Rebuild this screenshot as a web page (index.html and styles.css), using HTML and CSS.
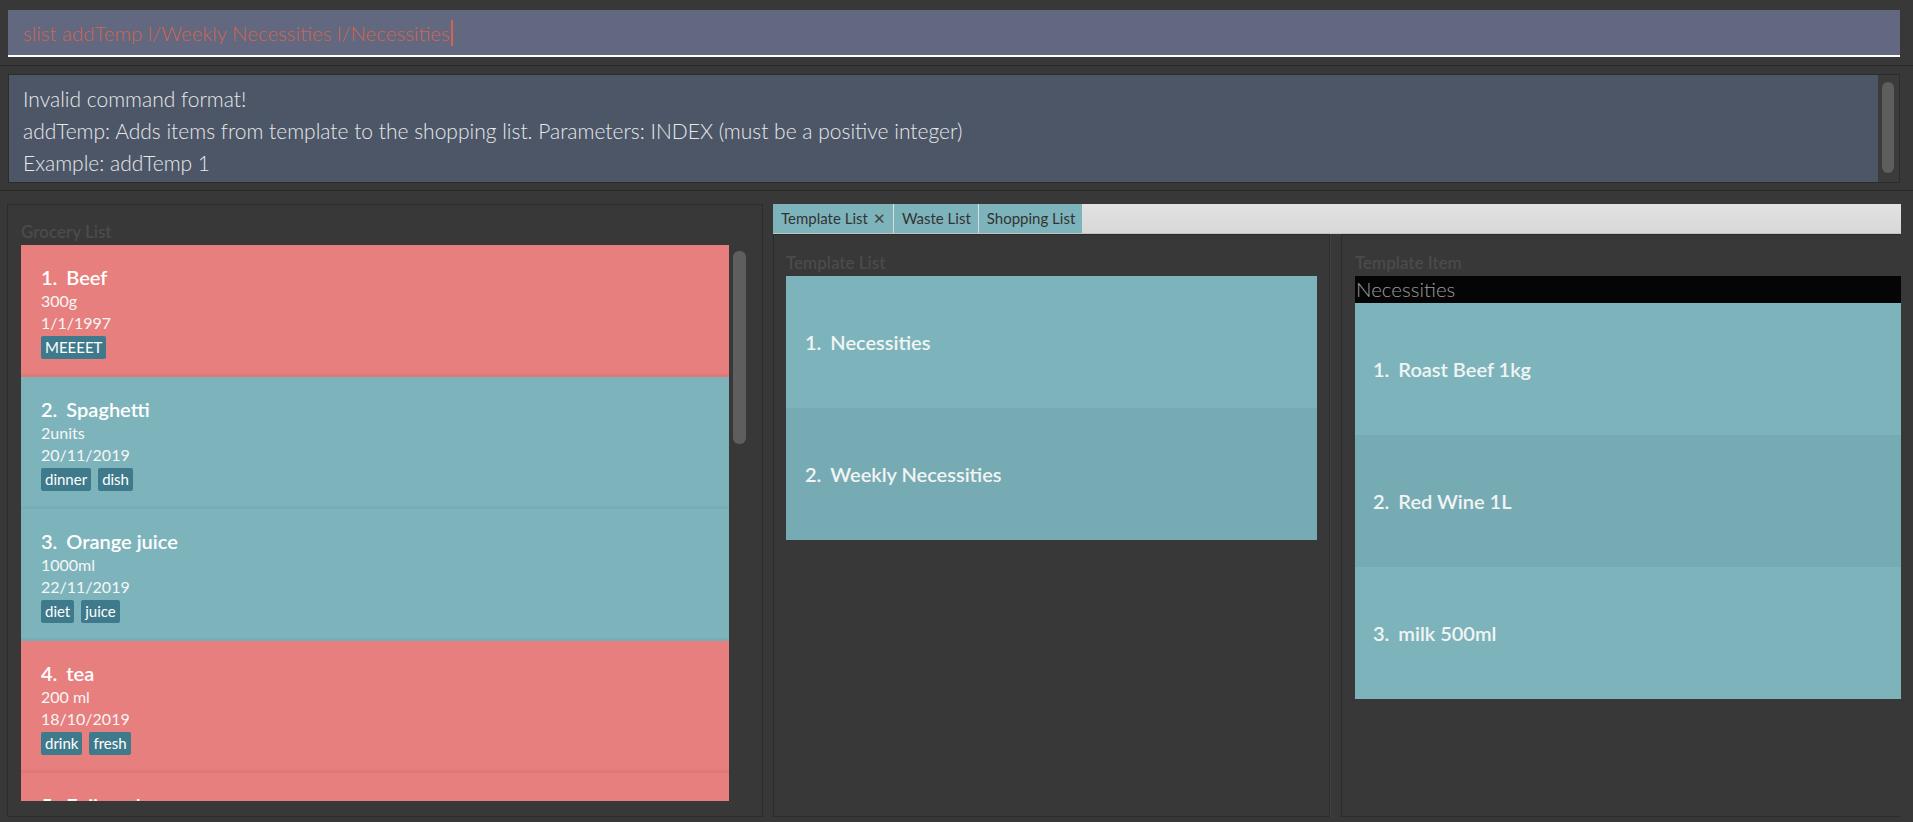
FILE: index.html
```html
<!DOCTYPE html>
<html>
  <head>
    <meta charset="utf-8">
    <link rel="stylesheet" href="styles.css">
  </head>
  <body>
    <div class="command-bar">
      <div class="command-box"><span class="command-box__text">slist addTemp l/Weekly Necessities l/Necessities</span><span class="command-box__caret"></span></div>
    </div>

    <div class="result-bar">
      <div class="result-box">
        <div class="result-box__text">
          <div>Invalid command format!</div>
          <div>addTemp: Adds items from template to the shopping list. Parameters: INDEX (must be a positive integer)</div>
          <div>Example: addTemp 1</div>
        </div>
        <div class="result-box__scroll"><div class="result-box__thumb"></div></div>
      </div>
    </div>

    <div class="main">
      <div class="panel grocery">
        <div class="panel__label">Grocery List</div>
        <div class="grocery__list">
          <div class="grocery__cards">
            <div class="card card--red">
              <div class="card__title"><span class="card__idx">1.</span>Beef</div>
              <div class="card__detail">300g</div>
              <div class="card__detail">1/1/1997</div>
              <div class="card__tags"><span class="tag">MEEEET</span></div>
            </div>
            <div class="card">
              <div class="card__title"><span class="card__idx">2.</span>Spaghetti</div>
              <div class="card__detail">2units</div>
              <div class="card__detail">20/11/2019</div>
              <div class="card__tags"><span class="tag">dinner</span><span class="tag">dish</span></div>
            </div>
            <div class="card">
              <div class="card__title"><span class="card__idx">3.</span>Orange juice</div>
              <div class="card__detail">1000ml</div>
              <div class="card__detail">22/11/2019</div>
              <div class="card__tags"><span class="tag">diet</span><span class="tag">juice</span></div>
            </div>
            <div class="card card--red">
              <div class="card__title"><span class="card__idx">4.</span>tea</div>
              <div class="card__detail">200 ml</div>
              <div class="card__detail">18/10/2019</div>
              <div class="card__tags"><span class="tag">drink</span><span class="tag">fresh</span></div>
            </div>
            <div class="card card--red">
              <div class="card__title"><span class="card__idx">5.</span>Fuji apple</div>
            </div>
          </div>
          <div class="scroll"><div class="scroll__thumb"></div></div>
        </div>
      </div>

      <div class="tabs">
        <div class="tabs__header">
          <div class="tab">Template List<span class="tab__close">&#x2715;</span></div>
          <div class="tab">Waste List</div>
          <div class="tab">Shopping List</div>
        </div>
        <div class="tabs__body">
          <div class="panel template-list">
            <div class="panel__label">Template List</div>
            <div class="rows">
              <div class="row"><span class="card__idx">1.</span>Necessities</div>
              <div class="row row--alt"><span class="card__idx">2.</span>Weekly Necessities</div>
            </div>
          </div>
          <div class="divider"></div>
          <div class="panel template-item">
            <div class="panel__label">Template Item</div>
            <div class="template-item__name">Necessities</div>
            <div class="rows">
              <div class="row"><span class="card__idx">1.</span>Roast Beef 1kg</div>
              <div class="row row--alt"><span class="card__idx">2.</span>Red Wine 1L</div>
              <div class="row"><span class="card__idx">3.</span>milk 500ml</div>
            </div>
          </div>
        </div>
      </div>
    </div>
  </body>
</html>
```

FILE: styles.css
```css
html,
body {
  margin: 0;
  height: 822px;
  overflow: hidden;
}
body {
  background: #383838;
  font-family: Lato, "Open Sans", sans-serif;
  color: #fff;
}

/* command input */
.command-bar {
  padding: 10px 13px 8px 8px;
  border-bottom: 1px solid #2a2a2a;
}
.command-box {
  height: 45px;
  background: #616880;
  border-bottom: 2px solid #fff;
  display: flex;
  align-items: center;
  padding-left: 15px;
  font-size: 20.5px;
  font-weight: 300;
  color: #d06651;
}
.command-box__caret {
  display: inline-block;
  width: 2px;
  height: 26px;
  background: #d06651;
  margin-left: 1px;
}

/* result display */
.result-bar {
  padding: 8px 13px 7px 8px;
  border-bottom: 1px solid #2a2a2a;
}
.result-box {
  height: 107px;
  display: flex;
  border: 1px solid #2c2c2c;
}
.result-box__text {
  flex: 1;
  background: #4d5666;
  padding: 8px 14px;
  font-size: 21px;
  font-weight: 300;
  line-height: 32px;
  color: #e6e8ec;
}
.result-box__scroll {
  width: 21px;
  background: #3b3b3b;
  padding-top: 7px;
}
.result-box__thumb {
  width: 12px;
  height: 91px;
  margin-left: 4px;
  border-radius: 6px;
  background: #5e5e5e;
}

/* bottom area */
.main {
  display: flex;
  gap: 10px;
  padding: 13px 12px 5px 7px;
  height: 613px;
}
.panel {
  border: 1px solid #2c2c2c;
  box-sizing: border-box;
  background: #383838;
}
.panel__label {
  font-size: 17px;
  font-weight: 600;
  line-height: 21px;
  color: #4b4b4b;
  margin-bottom: 3px;
}

.grocery {
  width: 756px;
  padding: 16px 15px 15px 13px;
  display: flex;
  flex-direction: column;
}
.grocery__list {
  flex: 1;
  display: flex;
  gap: 4px;
  overflow: hidden;
}
.grocery__cards {
  width: 708px;
  overflow: hidden;
}
.scroll {
  width: 13px;
  padding-top: 6px;
}
.scroll__thumb {
  height: 193px;
  border-radius: 6px;
  background: #5e5e5e;
}

.card {
  height: 132px;
  box-sizing: border-box;
  padding: 19px 20px 0 20px;
  background: #7db4bc;
  border-bottom: 3px solid #77adb5;
}
.card--red {
  background: #e77f7e;
  border-bottom-color: #e07876;
}
.card__title {
  font-size: 20px;
  font-weight: 600;
  line-height: 26px;
}
.card__idx {
  margin-right: 9px;
}
.card__detail {
  font-size: 16px;
  line-height: 22px;
  color: #f6f6f6;
}
.card__detail:first-of-type {
  margin-top: 5px;
}
.card__tags {
  display: flex;
  gap: 7px;
  margin-top: 2px;
}
.tag {
  background: #3f7a8c;
  border-radius: 2px;
  padding: 0 4px;
  height: 23px;
  line-height: 23px;
  font-size: 15px;
}

/* tab pane */
.tabs {
  width: 1128px;
  display: flex;
  flex-direction: column;
}
.tabs__header {
  height: 30px;
  background: linear-gradient(#e2e2e2, #d8d8d8);
  border-bottom: 1px solid #c4c4c4;
  box-sizing: border-box;
  display: flex;
  gap: 1px;
}
.tab {
  background: #7db4bc;
  color: #333;
  font-size: 15px;
  line-height: 29px;
  padding: 0 7px 0 8px;
}
.tab__close {
  font-size: 15px;
  margin-left: 5px;
  color: #444;
}
.tabs__body {
  flex: 1;
  display: flex;
}
.template-list {
  width: 557px;
  padding: 17px 12px 0 12px;
}
.divider {
  width: 11px;
  border-left: 1px solid #414141;
  box-sizing: border-box;
}
.template-item {
  flex: 1;
  padding: 17px 0 0 13px;
  border-right: 0;
}
.template-item__name {
  background: #050505;
  height: 27px;
  line-height: 27px;
  font-size: 20.5px;
  font-weight: 300;
  color: #9c9c9c;
  padding-left: 1px;
}
.row {
  height: 132px;
  display: flex;
  align-items: center;
  padding-left: 19px;
  background: #7db4bc;
  font-size: 20px;
  font-weight: 600;
  color: #f2f4f4;
}
.row--alt {
  background: #76abb3;
}
.template-item .row {
  padding-left: 18px;
}
```
